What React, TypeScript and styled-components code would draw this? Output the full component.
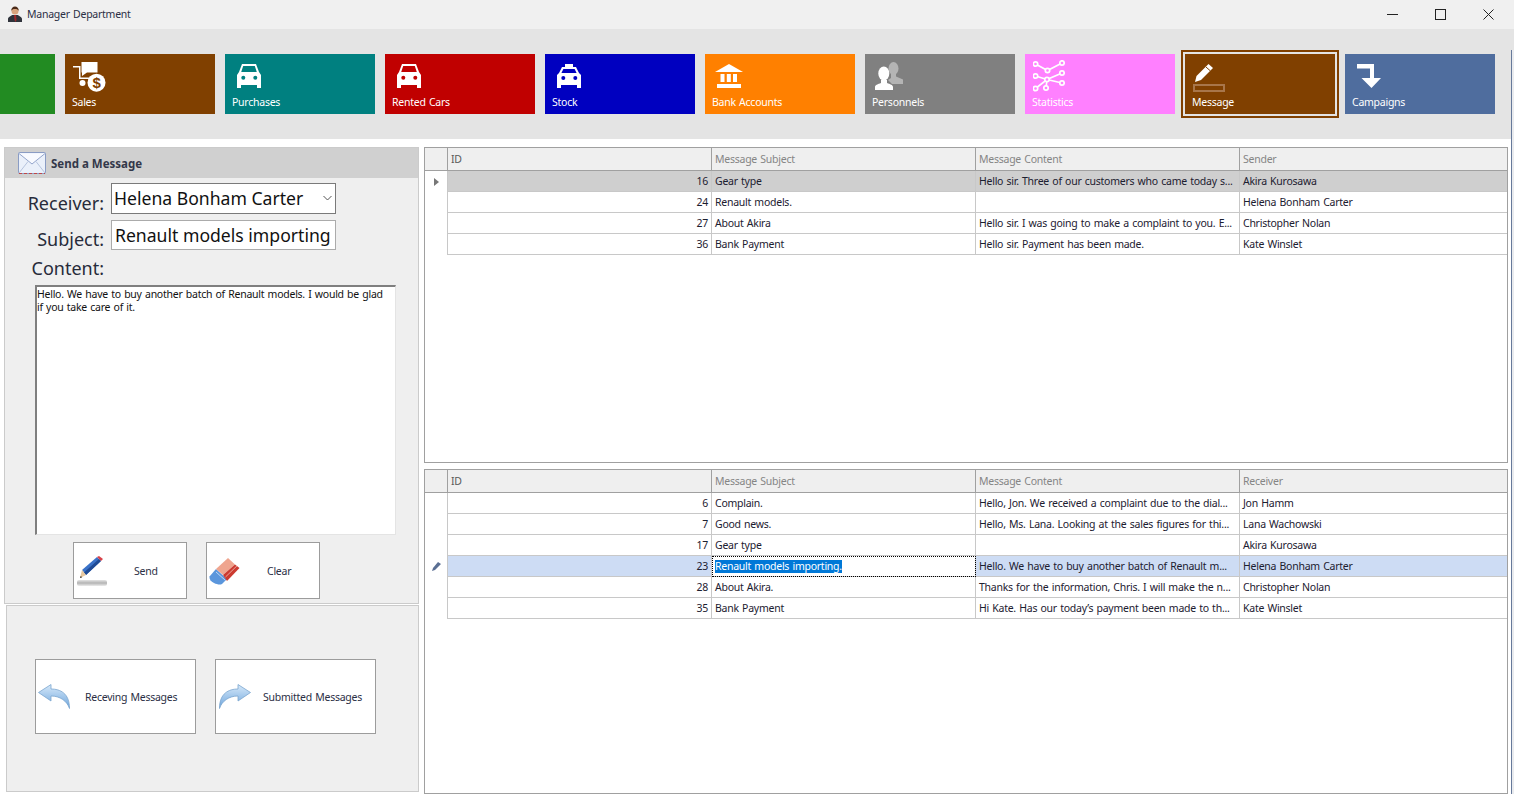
import React from 'react';
import styled, { createGlobalStyle } from 'styled-components';

const GlobalStyle = createGlobalStyle`
  html, body {
    margin: 0;
    padding: 0;
    background: #fff;
  }
  body {
    font-family: "Noto Sans", "Liberation Sans", sans-serif;
    font-size: 10.5px;
    letter-spacing: -0.25px;
    word-spacing: 0.8px;
    color: #1e2333;
  }
  svg {
    display: block;
  }
`;

const Window = styled.div`
  width: 1514px;
  height: 794px;
  overflow: hidden;
  display: flex;
  flex-direction: column;
  position: relative;
`;

// sliver of whatever window sits behind this one
const BehindEdge = styled.div`
  position: absolute;
  top: 50px;
  right: 0;
  bottom: 0;
  width: 2px;
  background: #e9ebee;
  border-left: 1px solid #66799a;
`;

const TitleBar = styled.div`
  height: 29px;
  flex: none;
  background: #f0f0f0;
  display: flex;
  align-items: center;
  padding: 0 0 1px 7px;
  box-sizing: border-box;
  color: #2b2f45;
`;

const TitleText = styled.span`
  margin-left: 4px;
  flex: 1;
`;

const WinButton = styled.div`
  width: 48px;
  height: 28px;
  display: flex;
  align-items: center;
  justify-content: center;
  &:last-child {
    margin-right: 2px;
  }
`;

const Ribbon = styled.div`
  height: 110px;
  flex: none;
  background: #e4e4e4;
  display: flex;
  gap: 10px;
  padding-top: 25px;
  box-sizing: border-box;
`;

const Tile = styled.div<{ $bg: string; $w?: number; $active?: boolean }>`
  width: ${(p) => p.$w ?? 150}px;
  height: 60px;
  flex: none;
  background: ${(p) => p.$bg};
  color: #fff;
  box-sizing: border-box;
  padding: 0 7px;
  ${(p) => p.$active && `box-shadow: 0 0 0 2px #e4e4e4, 0 0 0 4px ${p.$bg};`}
`;

const TileIcon = styled.div<{ $x: number; $y: number }>`
  height: 41px;
  box-sizing: border-box;
  padding: ${(p) => p.$y}px 0 0 ${(p) => p.$x}px;
`;

const TileLabel = styled.div`
  line-height: 14px;
`;

const Main = styled.div`
  flex: 1;
  display: flex;
  gap: 5px;
  padding: 8px 6px 0 4px;
  min-height: 0;
`;

const LeftColumn = styled.div`
  width: 415px;
  flex: none;
  display: flex;
  flex-direction: column;
  gap: 1px;
`;

const SendPanel = styled.div`
  height: 457px;
  flex: none;
  box-sizing: border-box;
  background: #efefef;
  border: 1px solid #cbcbcb;
`;

const PanelHeader = styled.div`
  height: 30px;
  background: #d0d0d0;
  display: flex;
  align-items: center;
  padding-left: 13px;
  gap: 5px;
  font-size: 11.5px;
  letter-spacing: 0;
  word-spacing: 0;
  font-weight: 700;
  color: #33384a;
`;

const FormRow = styled.div<{ $top: number; $h: number }>`
  display: flex;
  align-items: center;
  height: ${(p) => p.$h}px;
  margin-top: ${(p) => p.$top}px;
`;

const FieldLabel = styled.div<{ $nudge: number }>`
  width: 99px;
  flex: none;
  text-align: right;
  font-size: 18px;
  letter-spacing: 0;
  line-height: 24px;
  padding-top: ${(p) => p.$nudge}px;
  color: #272b3a;
`;

const FieldBox = styled.div`
  margin-left: 7px;
  width: 225px;
  height: 100%;
  box-sizing: border-box;
  background: #fff;
  border: 1px solid #7a7a7a;
  font-size: 17.6px;
  letter-spacing: 0;
  word-spacing: 0;
  color: #111;
  display: flex;
  align-items: center;
  justify-content: space-between;
  padding: 0 3px 2px 2px;
  white-space: nowrap;
`;

const SubjectBox = styled(FieldBox)`
  border-color: #ababab;
  padding-left: 3px;
  padding-bottom: 0;
`;

const ContentArea = styled.div`
  margin: 6px 0 0 30px;
  width: 361px;
  height: 250px;
  box-sizing: border-box;
  background: #fff;
  border: 1px solid #e4e4e4;
  border-top: 2px solid #7f7f7f;
  border-left: 2px solid #7f7f7f;
  padding: 1px 6px 0 0;
  line-height: 13px;
  color: #111;
`;

const ButtonRow = styled.div`
  display: flex;
  gap: 19px;
  margin: 7px 0 0 68px;
`;

const IconButton = styled.div<{ $w: number; $h: number }>`
  width: ${(p) => p.$w}px;
  height: ${(p) => p.$h}px;
  flex: none;
  box-sizing: border-box;
  background: #fff;
  border: 1px solid #9c9c9c;
  display: flex;
  align-items: center;
  color: #2b2f45;
`;

const ButtonGlyph = styled.div<{ $left: number }>`
  margin-left: ${(p) => p.$left}px;
  flex: none;
`;

const ButtonText = styled.span<{ $left: number }>`
  margin-left: ${(p) => p.$left}px;
  white-space: nowrap;
`;

const NavPanel = styled.div`
  flex: 1;
  margin: 0 0 2px 2px;
  background: #efefef;
  border: 1px solid #cbcbcb;
  box-sizing: border-box;
  display: flex;
  gap: 19px;
  padding: 53px 0 0 28px;
`;

const RightColumn = styled.div`
  flex: 1;
  display: flex;
  flex-direction: column;
  gap: 6px;
  min-width: 0;
`;

const GridBox = styled.div<{ $h: number }>`
  height: ${(p) => p.$h}px;
  flex: none;
  box-sizing: border-box;
  border: 1px solid #a0a0a0;
  background: #fff;
`;

const GridRow = styled.div<{ $head?: boolean; $bg?: string }>`
  display: grid;
  grid-template-columns: 23px 264px 264px 264px 1fr;
  height: ${(p) => (p.$head ? 23 : 21)}px;
  box-sizing: border-box;
  background: ${(p) => p.$bg ?? '#fff'};
`;

const HeadCell = styled.div`
  background: #efefef;
  border-right: 1px solid #a0a0a0;
  border-bottom: 1px solid #a0a0a0;
  color: #858585;
  padding-left: 3px;
  line-height: 22px;
  &:last-child {
    border-right: none;
  }
`;

const Corner = styled(HeadCell)`
  padding: 0;
`;

const HeadId = styled(HeadCell)`
  color: #5a5a5a;
`;

const RowMark = styled.div`
  background: #fff;
  border-right: 1px solid #c8c8c8;
  display: flex;
  align-items: center;
  justify-content: center;
`;

const Cell = styled.div<{ $right?: boolean; $focus?: boolean }>`
  border-right: 1px solid #c8c8c8;
  border-bottom: 1px solid #c8c8c8;
  padding: 0 3px;
  line-height: 20px;
  white-space: nowrap;
  overflow: hidden;
  color: #1c2030;
  text-align: ${(p) => (p.$right ? 'right' : 'left')};
  &:last-child {
    border-right: none;
  }
  ${(p) => p.$focus && `background: #fff; outline: 1px dotted #000; outline-offset: -1px;`}
`;

const Selected = styled.span`
  background: #0078d7;
  color: #fff;
  line-height: 13px;
  display: inline-block;
`;

type MsgRow = {
  id: number;
  subject: string;
  content: string;
  person: string;
  bg?: string;
  focus?: boolean;
};

const inbox: MsgRow[] = [
  { id: 16, subject: 'Gear type', content: 'Hello sir. Three of our customers who came today s...', person: 'Akira Kurosawa', bg: '#cfcfcf' },
  { id: 24, subject: 'Renault models.', content: '', person: 'Helena Bonham Carter' },
  { id: 27, subject: 'About Akira', content: 'Hello sir. I was going to make a complaint to you. E...', person: 'Christopher Nolan' },
  { id: 36, subject: 'Bank Payment', content: 'Hello sir. Payment has been made.', person: 'Kate Winslet' },
];

const outbox: MsgRow[] = [
  { id: 6, subject: 'Complain.', content: 'Hello, Jon. We received a complaint due to the dial...', person: 'Jon Hamm' },
  { id: 7, subject: 'Good news.', content: 'Hello, Ms. Lana. Looking at the sales figures for thi...', person: 'Lana Wachowski' },
  { id: 17, subject: 'Gear type', content: '', person: 'Akira Kurosawa' },
  { id: 23, subject: 'Renault models importing.', content: 'Hello. We have to buy another batch of Renault m...', person: 'Helena Bonham Carter', bg: '#cddcf4', focus: true },
  { id: 28, subject: 'About Akira.', content: 'Thanks for the information, Chris. I will make the n...', person: 'Christopher Nolan' },
  { id: 35, subject: 'Bank Payment', content: 'Hi Kate. Has our today\u2019s payment been made to th...', person: 'Kate Winslet' },
];

const CarIcon = ({ bg }: { bg: string }) => (
  <svg width="24" height="24" viewBox="0 0 24 24" fill="#fff">
    <path d="M5 0h14l3 8 2 3v13h-4v-3H4v3H0V11l2-3zM6.200 2 4.200 8h15.600l-2-6z" fillRule="evenodd" />
    <circle cx="6.300" cy="13.700" r="2" fill={bg} />
    <circle cx="18.300" cy="13.700" r="2" fill={bg} />
  </svg>
);

const TaxiIcon = ({ bg }: { bg: string }) => (
  <svg width="24" height="24" viewBox="0 0 24 24" fill="#fff">
    <path d="M8 0h8v3h3l3 6 2 2v13h-4v-3H4v3H0V11l2-2 3-6h3zM6.400 5 4.400 9h15.200l-2-4z" fillRule="evenodd" />
    <circle cx="6.300" cy="14" r="2" fill={bg} />
    <circle cx="18.300" cy="14" r="2" fill={bg} />
  </svg>
);

const SalesIcon = () => (
  <svg width="33" height="30" viewBox="0 0 33 30" fill="#fff">
    <path d="M0 4h7.500v11.500H17v1.500H6V5.500H0z" />
    <path d="M8.500 0h16v10.500H14L9 14V10.500H8.500z" />
    <circle cx="9.500" cy="21" r="3" />
    <circle cx="23.500" cy="20.700" r="9" />
    <text x="23.500" y="26" textAnchor="middle" fontSize="15" fontWeight="700" fill="#804000" fontFamily="Liberation Sans, sans-serif">$</text>
  </svg>
);

const BankIcon = () => (
  <svg width="28" height="24" viewBox="0 0 28 24" fill="#fff">
    <path d="M14 0 28 8H0z" />
    <path d="M5.500 10h4v8h-4zM11.800 10h4v8h-4zM18 10h4v8h-4z" />
    <path d="M2 20h24v4H2z" />
  </svg>
);

const PeopleIcon = () => (
  <svg width="28" height="28" viewBox="0 0 28 28">
    <ellipse cx="18.500" cy="6.500" rx="5" ry="6.500" fill="#b4b4b4" />
    <path d="M16 12h5v2.500l7 3V22H17l-4-4 3-2z" fill="#b4b4b4" />
    <ellipse cx="8.800" cy="11.500" rx="5.500" ry="7" fill="#fff" />
    <path d="M0 28v-3c0-2 3-3 6-4v-3h6v3c3 1 6 2 6 4v3z" fill="#fff" />
  </svg>
);

const StatsIcon = () => (
  <svg width="32" height="32" viewBox="0 0 32 32" fill="none" stroke="#fff" strokeWidth="1.700">
    <path d="M2.500 4 14.500 10.500 29 3M2.500 16 14 19.500 29 23M2.500 28.500 14 19.500 29 13M14 19.500 13 28" />
    <g fill="#ff80ff">
      <circle cx="2.500" cy="4" r="2.200" />
      <circle cx="14.500" cy="10.500" r="2.200" />
      <circle cx="29" cy="3" r="2.200" />
      <circle cx="2.500" cy="16" r="2.200" />
      <circle cx="14" cy="19.500" r="2.200" />
      <circle cx="29" cy="13" r="2.200" />
      <circle cx="2.500" cy="28.500" r="2.200" />
      <circle cx="13" cy="28" r="2.200" />
      <circle cx="29" cy="23" r="2.200" />
    </g>
  </svg>
);

const PenIcon = () => (
  <svg width="32" height="28" viewBox="0 0 32 28">
    <path d="M2 18 3.500 12 14 1.500 15.500 0 20 4 18.500 5.500 8 16z" fill="#fff" />
    <path d="M13 3 17.500 7" stroke="#804000" />
    <rect x="1" y="21" width="30" height="6" fill="none" stroke="#a8764a" strokeWidth="2" />
  </svg>
);

const DownArrowIcon = () => (
  <svg width="24" height="24" viewBox="0 0 24 24" fill="#fff">
    <path d="M0 0H17V14H24L14.500 24 4.500 14H13V4.500H0z" />
  </svg>
);

const ManIcon = () => (
  <svg width="16" height="16" viewBox="0 0 16 16">
    <path d="M1 16v-3c0-2 3-3 4-4h6c1 1 4 2 4 4v3z" fill="#30343c" />
    <path d="M7 9h2l.5 5-1 2-1-2z" fill="#a02828" />
    <circle cx="8" cy="5" r="3.500" fill="#d9a47e" />
    <path d="M4.300 5C4 2 6 .5 8 .5S12 2 11.700 5C11 3.500 10 3 8 3S5 3.500 4.300 5z" fill="#4a2a18" />
  </svg>
);

const EnvelopeIcon = () => (
  <svg width="28" height="22" viewBox="0 0 28 22">
    <rect x=".5" y=".5" width="27" height="21" rx="1" fill="#eaf0fa" stroke="#8a9cc4" />
    <path d="M1 1.500 14 12 27 1.500" fill="#f8faff" stroke="#93a5cc" />
    <path d="M1 21 10 9.500M27 21 18 9.500" stroke="#b6c4de" fill="none" />
    <path d="M1 21.500h26" stroke="#c04848" strokeDasharray="3 2" />
  </svg>
);

const PencilIcon = () => (
  <svg width="30" height="30" viewBox="0 0 30 30">
    <defs>
      <linearGradient id="shade" x1="0" x2="0" y1="0" y2="1">
        <stop offset="0" stopColor="#e4e4e4" />
        <stop offset=".5" stopColor="#b4b4b4" />
        <stop offset="1" stopColor="#ececec" />
      </linearGradient>
    </defs>
    <path d="M5 14 20 1l4 4L9 19z" fill="#3a72c8" />
    <path d="M7 16.500 22 3l2 2L9 19z" fill="#1f4a94" />
    <path d="M20 1 22 0l4 3-2 2z" fill="#d8424a" />
    <path d="M5 14l4 5-6 3z" fill="#e8c9a0" />
    <path d="M3.700 20l1.500 1.200L3 22z" fill="#222" />
    <rect x="0" y="24" width="30" height="6" rx="2" fill="url(#shade)" />
  </svg>
);

const EraserIcon = () => (
  <svg width="32" height="28" viewBox="0 0 32 28">
    <path d="M1.500 19.500 8 12l11 10-5 5c-2 1-5 .5-8-1-3-1.500-5-4-4.500-6.500z" fill="#5b96dc" />
    <path d="M8 12 20 1l7 6.500L15 18z" fill="#efa58f" />
    <path d="M15 18 27 7.500l4.500 3.500L19 24z" fill="#cc3a30" />
    <path d="M17.500 20 29 8.800" stroke="#f0c4b8" strokeWidth=".8" />
    <path d="M8 15l9 8" stroke="#d8e6f6" strokeWidth=".8" />
  </svg>
);

const ReplyArrow = ({ flip }: { flip?: boolean }) => (
  <svg width="32" height="25" viewBox="0 0 32 25" style={flip ? { transform: 'scaleX(-1)' } : undefined}>
    <defs>
      <linearGradient id={flip ? 'arrowR' : 'arrowL'} x1="0" x2="0" y1="0" y2="1">
        <stop offset="0" stopColor="#d6e9fa" />
        <stop offset="1" stopColor="#6ea5dc" />
      </linearGradient>
    </defs>
    <path
      d="M.5 8.500 13 .500V5C22 5 31.500 9 31.500 24.500 29 17 22 12 13 12V17z"
      fill={`url(#${flip ? 'arrowR' : 'arrowL'})`}
      stroke="#7ba6cf"
      strokeWidth=".8"
    />
  </svg>
);

const MsgGrid = ({ h, rows, last, mark, activeMark }: { h: number; rows: MsgRow[]; last: string; mark: React.ReactNode; activeMark: number }) => (
  <GridBox $h={h}>
    <GridRow $head>
      <Corner />
      <HeadId>ID</HeadId>
      <HeadCell>Message Subject</HeadCell>
      <HeadCell>Message Content</HeadCell>
      <HeadCell>{last}</HeadCell>
    </GridRow>
    {rows.map((r, i) => (
      <GridRow key={r.id} $bg={r.bg}>
        <RowMark>{i === activeMark ? mark : null}</RowMark>
        <Cell $right>{r.id}</Cell>
        <Cell $focus={r.focus}>{r.focus ? <Selected>{r.subject}</Selected> : r.subject}</Cell>
        <Cell>{r.content}</Cell>
        <Cell>{r.person}</Cell>
      </GridRow>
    ))}
  </GridBox>
);

const tiles = [
  { label: 'Sales', bg: '#804000', x: 1, y: 8, icon: <SalesIcon /> },
  { label: 'Purchases', bg: '#008080', x: 5, y: 10, icon: <CarIcon bg="#008080" /> },
  { label: 'Rented Cars', bg: '#c00000', x: 5, y: 10, icon: <CarIcon bg="#c00000" /> },
  { label: 'Stock', bg: '#0000c0', x: 5, y: 10, icon: <TaxiIcon bg="#0000c0" /> },
  { label: 'Bank Accounts', bg: '#ff8000', x: 3, y: 10, icon: <BankIcon /> },
  { label: 'Personnels', bg: '#808080', x: 3, y: 8, icon: <PeopleIcon /> },
  { label: 'Statistics', bg: '#ff80ff', x: 1, y: 6, icon: <StatsIcon /> },
  { label: 'Message', bg: '#804000', x: 1, y: 10, icon: <PenIcon />, active: true },
  { label: 'Campaigns', bg: '#4f6d9e', x: 5, y: 10, icon: <DownArrowIcon /> },
];

export default function App() {
  return (
    <Window>
      <GlobalStyle />
      <TitleBar>
        <ManIcon />
        <TitleText>Manager Department</TitleText>
        <WinButton>
          <svg width="11" height="11" viewBox="0 0 11 11"><path d="M0 5.500h11" stroke="#222" /></svg>
        </WinButton>
        <WinButton>
          <svg width="11" height="11" viewBox="0 0 11 11"><rect x=".5" y=".5" width="10" height="10" fill="none" stroke="#222" /></svg>
        </WinButton>
        <WinButton>
          <svg width="11" height="11" viewBox="0 0 11 11"><path d="M.5.500l10 10M10.500.500l-10 10" stroke="#222" /></svg>
        </WinButton>
      </TitleBar>
      <Ribbon>
        <Tile $bg="#228b22" $w={55} />
        {tiles.map((t) => (
          <Tile key={t.label} $bg={t.bg} $active={t.active}>
            <TileIcon $x={t.x} $y={t.y}>{t.icon}</TileIcon>
            <TileLabel>{t.label}</TileLabel>
          </Tile>
        ))}
      </Ribbon>
      <Main>
        <LeftColumn>
          <SendPanel>
            <PanelHeader>
              <EnvelopeIcon />
              Send a Message
            </PanelHeader>
            <FormRow $top={5} $h={31}>
              <FieldLabel $nudge={8}>Receiver:</FieldLabel>
              <FieldBox>
                Helena Bonham Carter
                <svg width="9" height="6" viewBox="0 0 9 6"><path d="M.5 1 4.500 5 8.500 1" fill="none" stroke="#555" /></svg>
              </FieldBox>
            </FormRow>
            <FormRow $top={6} $h={30}>
              <FieldLabel $nudge={8}>Subject:</FieldLabel>
              <SubjectBox>Renault models importing</SubjectBox>
            </FormRow>
            <FormRow $top={4} $h={25}>
              <FieldLabel $nudge={2}>Content:</FieldLabel>
            </FormRow>
            <ContentArea>
              Hello. We have to buy another batch of Renault models. I would be glad if you take care of it.
            </ContentArea>
            <ButtonRow>
              <IconButton $w={114} $h={57}>
                <ButtonGlyph $left={3}><PencilIcon /></ButtonGlyph>
                <ButtonText $left={27}>Send</ButtonText>
              </IconButton>
              <IconButton $w={114} $h={57}>
                <ButtonGlyph $left={1}><EraserIcon /></ButtonGlyph>
                <ButtonText $left={27}>Clear</ButtonText>
              </IconButton>
            </ButtonRow>
          </SendPanel>
          <NavPanel>
            <IconButton $w={161} $h={75}>
              <ButtonGlyph $left={2}><ReplyArrow /></ButtonGlyph>
              <ButtonText $left={15}>Receving Messages</ButtonText>
            </IconButton>
            <IconButton $w={161} $h={75}>
              <ButtonGlyph $left={3}><ReplyArrow flip /></ButtonGlyph>
              <ButtonText $left={12}>Submitted Messages</ButtonText>
            </IconButton>
          </NavPanel>
        </LeftColumn>
        <RightColumn>
          <MsgGrid
            h={316}
            rows={inbox}
            last="Sender"
            activeMark={0}
            mark={<svg width="5" height="8" viewBox="0 0 5 8"><path d="M0 0l5 4-5 4z" fill="#777" /></svg>}
          />
          <MsgGrid
            h={325}
            rows={outbox}
            last="Receiver"
            activeMark={3}
            mark={<svg width="9" height="9" viewBox="0 0 9 9"><path d="M0 9l1-3 5-6 3 2-6 6z" fill="#5a6f93" /></svg>}
          />
        </RightColumn>
      </Main>
      <BehindEdge />
    </Window>
  );
}
